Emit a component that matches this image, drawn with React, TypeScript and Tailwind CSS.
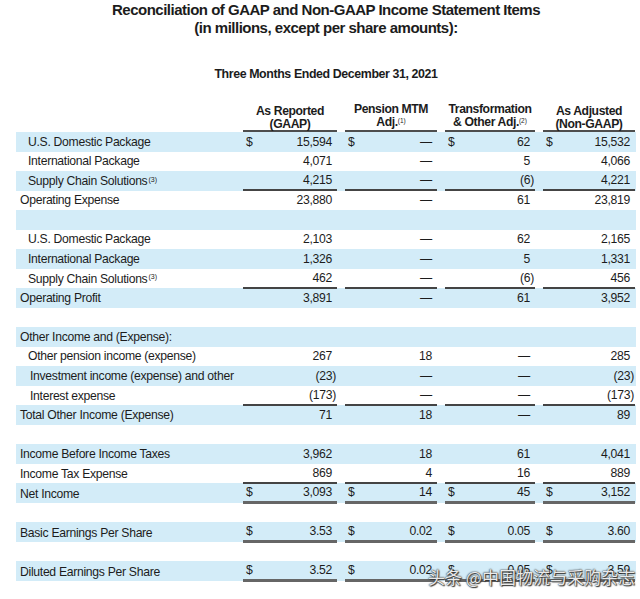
import clsx from "clsx";

type Line = "single" | "double" | null;

interface Row {
  label?: string;
  sup?: string;
  indent?: number;
  values?: string[];
  dollar?: boolean;
  line?: Line;
}

const rows: Row[] = [
  { label: "U.S. Domestic Package", indent: 12, values: ["15,594", "—", "62", "15,532"], dollar: true },
  { label: "International Package", indent: 12, values: ["4,071", "—", "5", "4,066"] },
  { label: "Supply Chain Solutions", sup: "(3)", indent: 12, values: ["4,215", "—", "(6)", "4,221"], line: "single" },
  { label: "Operating Expense", values: ["23,880", "—", "61", "23,819"] },
  {},
  { label: "U.S. Domestic Package", indent: 12, values: ["2,103", "—", "62", "2,165"] },
  { label: "International Package", indent: 12, values: ["1,326", "—", "5", "1,331"] },
  { label: "Supply Chain Solutions", sup: "(3)", indent: 12, values: ["462", "—", "(6)", "456"], line: "single" },
  { label: "Operating Profit", values: ["3,891", "—", "61", "3,952"] },
  {},
  { label: "Other Income and (Expense):" },
  { label: "Other pension income (expense)", indent: 12, values: ["267", "18", "—", "285"] },
  { label: "Investment income (expense) and other", indent: 14, values: ["(23)", "—", "—", "(23)"] },
  { label: "Interest expense", indent: 14, values: ["(173)", "—", "—", "(173)"], line: "single" },
  { label: "Total Other Income (Expense)", values: ["71", "18", "—", "89"] },
  {},
  { label: "Income Before Income Taxes", values: ["3,962", "18", "61", "4,041"] },
  { label: "Income Tax Expense", values: ["869", "4", "16", "889"], line: "single" },
  { label: "Net Income", values: ["3,093", "14", "45", "3,152"], dollar: true, line: "double" },
  {},
  { label: "Basic Earnings Per Share", values: ["3.53", "0.02", "0.05", "3.60"], dollar: true, line: "double" },
  {},
  { label: "Diluted Earnings Per Share", values: ["3.52", "0.02", "0.05", "3.59"], dollar: true, line: "double" },
];

const headers = [
  ["As Reported", "(GAAP)", ""],
  ["Pension MTM", "Adj.", "(1)"],
  ["Transformation", "& Other Adj.", "(2)"],
  ["As Adjusted", "(Non-GAAP)", ""],
];

const cols = "grid grid-cols-[219px_94px_92px_90px_92px] gap-x-2";

const Amount = ({ v }: { v: string }) =>
  v.endsWith(")") ? (
    <span>
      {v.slice(0, -1)}
      <span className="-mr-[4px]">)</span>
    </span>
  ) : (
    <span>{v}</span>
  );

const App = () => {
  return (
    <div className="relative w-[640px] h-[599px] overflow-hidden bg-white text-[#1c1c1c] font-['Liberation_Sans',Arial,sans-serif]">
      <div className="ml-[16px] w-[620px]">
        <div className="pt-[1px] text-center font-bold text-[15px] tracking-[-0.5px] leading-[18px]">
          <div>Reconciliation of GAAP and Non-GAAP Income Statement Items</div>
          <div>(in millions, except per share amounts):</div>
        </div>
        <div className="mt-[30px] text-center font-bold text-[12.4px] tracking-[-0.4px] leading-[14px]">
          Three Months Ended December 31, 2021
        </div>

        {/* column heads */}
        <div className={clsx(cols, "mt-[24px] text-[12.2px] tracking-[-0.4px] font-bold")}>
          <div />
          {headers.map(([a, b, s]) => (
            <div
              key={a}
              className="h-[27px] flex flex-col justify-end items-center leading-[12.5px] border-b-2 border-[#4d4d4d]"
            >
              <div>{a}</div>
              <div>
                {b}
                {s && <span className="text-[6.5px] tracking-normal font-normal relative -top-[3px]">{s}</span>}
              </div>
            </div>
          ))}
        </div>

        {/* body */}
        <div className="text-[12.2px] tracking-[-0.3px]">
          {rows.map((r, i) => (
            <div
              key={i}
              className={clsx(cols, "h-[19.5px]", i % 2 === 0 ? "bg-[#d3ecf8]" : "bg-white")}
            >
              <div className="flex items-center whitespace-nowrap" style={{ paddingLeft: r.indent ?? 4 }}>
                {r.label}
                {r.sup && <span className="text-[7px] tracking-normal ml-[1px] relative -top-[1px]">{r.sup}</span>}
              </div>
              {r.values
                ? r.values.map((v, j) => (
                    <div
                      key={j}
                      className={clsx(
                        "flex items-center justify-between pl-[3px] pr-[5px]",
                        r.line === "single" && "border-b-2 border-[#444]",
                        r.line === "double" && "border-b-[3px] border-[#666]",
                      )}
                    >
                      <span>{r.dollar ? "$" : ""}</span>
                      <Amount v={v} />
                    </div>
                  ))
                : null}
            </div>
          ))}
        </div>
      </div>

      {/* watermark */}
      <div className="absolute left-[428px] top-[565px] text-[17px] leading-[24px] text-white/90 font-['Noto_Sans_CJK_SC',sans-serif] [text-shadow:0_0_1px_#222,0_0_2px_#444,1px_1px_1px_#333] whitespace-nowrap">
        头条 @中国物流与采购杂志
      </div>
    </div>
  );
};

export default App;
